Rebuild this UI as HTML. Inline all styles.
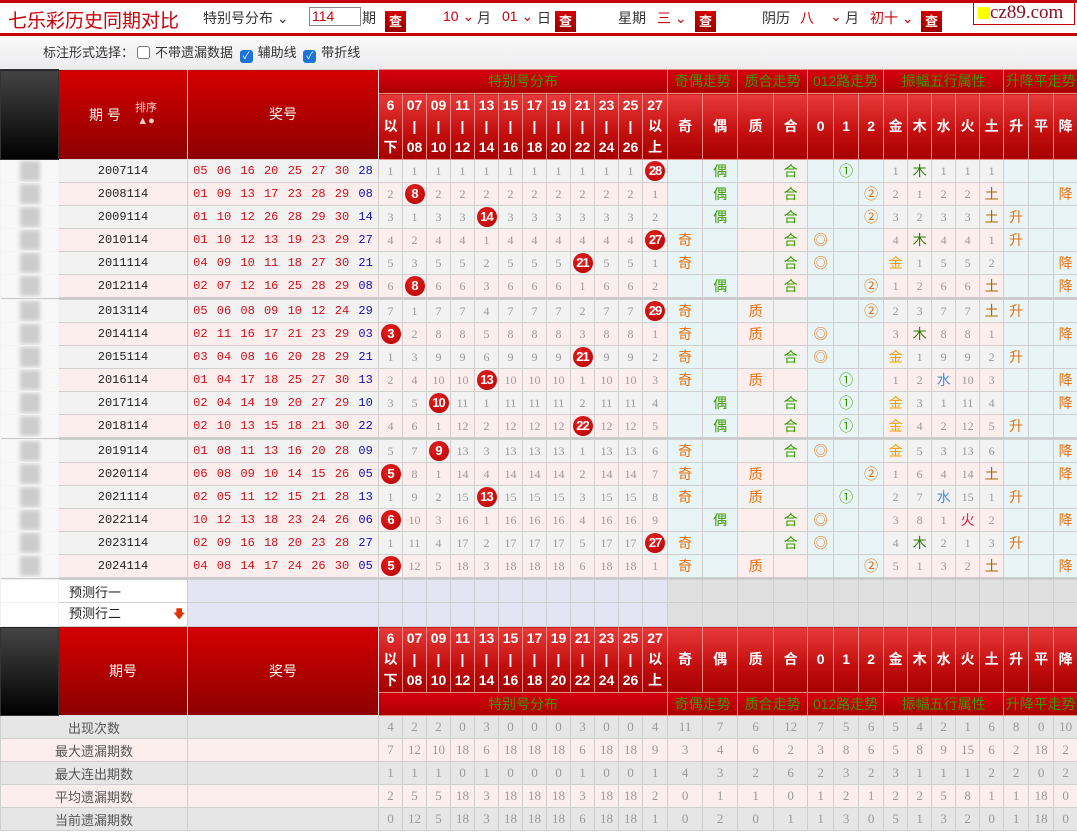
<!DOCTYPE html>
<html><head><meta charset="utf-8"><style>
*{margin:0;padding:0;box-sizing:border-box}
body{width:1077px;height:832px;overflow:hidden;background:#fff;font-family:"Liberation Sans","Noto Sans CJK SC",sans-serif;position:relative}
#top{position:absolute;left:0;top:0;width:1077px;height:36px;border-top:3px solid #c8000a;border-bottom:3px solid #c8000a;background:#fff}
#top span{position:absolute;top:5px;font-size:14px;color:#333}
.r{color:#c8000a!important}
.q{position:absolute;top:8px;width:21px;height:21px;background:linear-gradient(#d40000,#900);color:#fff;font-size:13px;font-weight:bold;text-align:center;line-height:21px}
#bar{position:absolute;left:0;top:36px;width:1077px;height:33px;background:linear-gradient(#fafafa,#ececee);font-size:13px;color:#333}
.cb{display:inline-block;width:13px;height:13px;border-radius:3px;vertical-align:-2px;margin:0 5px 0 3px}
.cb.off{border:1px solid #777;background:#fff}
.cb.on{background:#1a73d9;color:#fff;font-size:10px;line-height:13px;text-align:center}
table{position:absolute;left:0;top:69px;border-collapse:collapse;table-layout:fixed;width:1077px}
td{border:1px solid #cfcfcf;padding:0;text-align:center;font-size:12px;color:#999;height:23px;overflow:hidden;white-space:nowrap;font-family:"Liberation Serif","Noto Sans CJK SC",serif}
.h td{background:linear-gradient(#e83a3a,#c20d0d 60%,#a50000);color:#fff;font-size:14px;font-weight:bold;border-color:#f08888;font-family:"Liberation Sans","Noto Sans CJK SC",sans-serif;line-height:21px}
.h td.g{background:linear-gradient(#d80010,#a80000);font-weight:normal}
td.big{background:linear-gradient(#d40000,#8c0000)!important;font-weight:normal!important;border-color:#ddd!important}
td.dk{background:linear-gradient(#444,#222 50%,#000)!important;border-color:#333!important}
tr.a td{background:#f2f2f2}
tr.b td{background:#fdeeee}
tr.a td.c,tr.b td.c{background:#e9f4f6}
td.l{background:#f8f8f8!important;border-color:#f4f4f4}
td.l i{display:block;width:20px;height:20px;margin:0 auto;background:#ccc;filter:blur(2px)}
td.p{color:#222;font-family:"Liberation Mono",monospace;font-size:12px}
td.n{color:#d0101a;font-family:"Liberation Mono",monospace;font-size:12px;word-spacing:2px}
td.n b{color:#1010b0;font-weight:normal}
.bl{display:inline-block;width:20px;height:20px;border-radius:50%;background:radial-gradient(circle at 40% 35%,#e82020,#b00000);color:#fff;font-weight:bold;font-family:"Liberation Sans",sans-serif;font-size:13px;line-height:20px;letter-spacing:-1px}
.o{color:#e8700a!important;font-size:14px}.g{color:#3a9a00!important;font-size:14px}.y{color:#f0a000!important;font-size:14px}.m{color:#2d7a00!important;font-size:14px}.w{color:#4a8ee0!important;font-size:14px}.f{color:#e0204a!important;font-size:14px}.t{color:#a06a00!important;font-size:14px}
tr.sep td{height:2px;background:#c8c8c8;border:0}
tr.pr td{background:#e0e0e0;height:23px}
tr.pr td.lv{background:#e4e4f4}
tr.pr td.wt{background:#fff;color:#222;text-align:left;padding-left:10px;font-family:"Noto Sans CJK SC",sans-serif;font-size:13px}
tr.s td{font-size:13px;height:23px}
tr.sa td{background:#e6e6e6}
tr.sb td{background:#fdeeee}
td.sl{color:#555!important;font-family:"Noto Sans CJK SC",sans-serif}
</style></head><body>
<div id="top">
<span style="left:8px;top:3px;font-size:19px;color:#c8000a">七乐彩历史同期对比</span>
<span style="left:203px">特别号分布 ⌄</span>
<span style="left:309px;top:4px;width:52px;height:19px;border:1px solid #888;color:#c8000a;padding-left:2px;line-height:17px">114</span>
<span style="left:362px">期</span><div class="q" style="left:385px">查</div>
<span class="r" style="left:443px">10 ⌄</span><span style="left:477px">月</span>
<span class="r" style="left:502px">01 ⌄</span><span style="left:537px">日</span><div class="q" style="left:555px">查</div>
<span style="left:618px">星期</span><span class="r" style="left:657px">三 ⌄</span><div class="q" style="left:695px">查</div>
<span style="left:762px">阴历</span><span class="r" style="left:800px">八</span><span class="r" style="left:830px">⌄</span><span style="left:845px">月</span>
<span class="r" style="left:870px">初十 ⌄</span><div class="q" style="left:921px">查</div>
<div style="position:absolute;left:973px;top:-1px;width:102px;height:23px;border:1px solid #c8000a;background:#fff;font-family:'Liberation Serif',serif;font-size:19px;color:#8a1020;line-height:20px;padding-left:4px"><i style="display:inline-block;width:12px;height:12px;background:#ff0;vertical-align:-1px"></i>cz89.com</div>
</div>
<div id="bar"><div style="position:absolute;left:43px;top:6px">标注形式选择：<span class="cb off"></span>不带遗漏数据 <span class="cb on">✓</span>辅助线 <span class="cb on">✓</span>带折线</div></div>
<table>
<colgroup><col style="width:58px"><col style="width:129px"><col style="width:191px"><col style="width:24px"><col style="width:24px"><col style="width:24px"><col style="width:24px"><col style="width:24px"><col style="width:24px"><col style="width:24px"><col style="width:24px"><col style="width:24px"><col style="width:24px"><col style="width:24px"><col style="width:25px"><col style="width:35px"><col style="width:35px"><col style="width:36px"><col style="width:34px"><col style="width:26px"><col style="width:25px"><col style="width:25px"><col style="width:24px"><col style="width:24px"><col style="width:24px"><col style="width:24px"><col style="width:24px"><col style="width:25px"><col style="width:25px"><col style="width:24px"></colgroup>
<tr class="h" style="height:24px"><td class="dk" rowspan="2" style="height:24px"></td><td class="big" rowspan="2"><span style="display:inline-block;width:16px;line-height:28px;margin-right:30px;vertical-align:middle">期 号</span><span style="display:inline-block;font-size:11px;color:#fcc;line-height:13px;vertical-align:middle">排序<br>▲●</span></td><td class="big" rowspan="2">奖号</td><td class="g" colspan="12" style="height:24px">特别号分布</td><td class="g" colspan="2">奇偶走势</td><td class="g" colspan="2">质合走势</td><td class="g" colspan="3">012路走势</td><td class="g" colspan="5">振幅五行属性</td><td class="g" colspan="3">升降平走势</td></tr>
<tr class="h" style="height:66px"><td style="height:66px">6<br>以<br>下</td><td>07<br>|<br>08</td><td>09<br>|<br>10</td><td>11<br>|<br>12</td><td>13<br>|<br>14</td><td>15<br>|<br>16</td><td>17<br>|<br>18</td><td>19<br>|<br>20</td><td>21<br>|<br>22</td><td>23<br>|<br>24</td><td>25<br>|<br>26</td><td>27<br>以<br>上</td><td>奇</td><td>偶</td><td>质</td><td>合</td><td>0</td><td>1</td><td>2</td><td>金</td><td>木</td><td>水</td><td>火</td><td>土</td><td>升</td><td>平</td><td>降</td></tr>
<tr class="a"><td class="l"><i></i></td><td class="p">2007114</td><td class="n">05 06 16 20 25 27 30 <b>28</b></td><td>1</td><td>1</td><td>1</td><td>1</td><td>1</td><td>1</td><td>1</td><td>1</td><td>1</td><td>1</td><td>1</td><td><span class="bl">28</span></td><td class="c"></td><td class="c g">偶</td><td></td><td class="g">合</td><td class="c"></td><td class="c g">①</td><td class="c"></td><td>1</td><td class="m">木</td><td>1</td><td>1</td><td>1</td><td class="c"></td><td class="c"></td><td class="c"></td></tr>
<tr class="b"><td class="l"><i></i></td><td class="p">2008114</td><td class="n">01 09 13 17 23 28 29 <b>08</b></td><td>2</td><td><span class="bl">8</span></td><td>2</td><td>2</td><td>2</td><td>2</td><td>2</td><td>2</td><td>2</td><td>2</td><td>2</td><td>1</td><td class="c"></td><td class="c g">偶</td><td></td><td class="g">合</td><td class="c"></td><td class="c"></td><td class="c o">②</td><td>2</td><td>1</td><td>2</td><td>2</td><td class="t">土</td><td class="c"></td><td class="c"></td><td class="c o">降</td></tr>
<tr class="a"><td class="l"><i></i></td><td class="p">2009114</td><td class="n">01 10 12 26 28 29 30 <b>14</b></td><td>3</td><td>1</td><td>3</td><td>3</td><td><span class="bl">14</span></td><td>3</td><td>3</td><td>3</td><td>3</td><td>3</td><td>3</td><td>2</td><td class="c"></td><td class="c g">偶</td><td></td><td class="g">合</td><td class="c"></td><td class="c"></td><td class="c o">②</td><td>3</td><td>2</td><td>3</td><td>3</td><td class="t">土</td><td class="c o">升</td><td class="c"></td><td class="c"></td></tr>
<tr class="b"><td class="l"><i></i></td><td class="p">2010114</td><td class="n">01 10 12 13 19 23 29 <b>27</b></td><td>4</td><td>2</td><td>4</td><td>4</td><td>1</td><td>4</td><td>4</td><td>4</td><td>4</td><td>4</td><td>4</td><td><span class="bl">27</span></td><td class="c o">奇</td><td class="c"></td><td></td><td class="g">合</td><td class="c o">◎</td><td class="c"></td><td class="c"></td><td>4</td><td class="m">木</td><td>4</td><td>4</td><td>1</td><td class="c o">升</td><td class="c"></td><td class="c"></td></tr>
<tr class="a"><td class="l"><i></i></td><td class="p">2011114</td><td class="n">04 09 10 11 18 27 30 <b>21</b></td><td>5</td><td>3</td><td>5</td><td>5</td><td>2</td><td>5</td><td>5</td><td>5</td><td><span class="bl">21</span></td><td>5</td><td>5</td><td>1</td><td class="c o">奇</td><td class="c"></td><td></td><td class="g">合</td><td class="c o">◎</td><td class="c"></td><td class="c"></td><td class="y">金</td><td>1</td><td>5</td><td>5</td><td>2</td><td class="c"></td><td class="c"></td><td class="c o">降</td></tr>
<tr class="b"><td class="l"><i></i></td><td class="p">2012114</td><td class="n">02 07 12 16 25 28 29 <b>08</b></td><td>6</td><td><span class="bl">8</span></td><td>6</td><td>6</td><td>3</td><td>6</td><td>6</td><td>6</td><td>1</td><td>6</td><td>6</td><td>2</td><td class="c"></td><td class="c g">偶</td><td></td><td class="g">合</td><td class="c"></td><td class="c"></td><td class="c o">②</td><td>1</td><td>2</td><td>6</td><td>6</td><td class="t">土</td><td class="c"></td><td class="c"></td><td class="c o">降</td></tr>
<tr class="sep"><td colspan="30"></td></tr>
<tr class="a"><td class="l"><i></i></td><td class="p">2013114</td><td class="n">05 06 08 09 10 12 24 <b>29</b></td><td>7</td><td>1</td><td>7</td><td>7</td><td>4</td><td>7</td><td>7</td><td>7</td><td>2</td><td>7</td><td>7</td><td><span class="bl">29</span></td><td class="c o">奇</td><td class="c"></td><td class="o">质</td><td></td><td class="c"></td><td class="c"></td><td class="c o">②</td><td>2</td><td>3</td><td>7</td><td>7</td><td class="t">土</td><td class="c o">升</td><td class="c"></td><td class="c"></td></tr>
<tr class="b"><td class="l"><i></i></td><td class="p">2014114</td><td class="n">02 11 16 17 21 23 29 <b>03</b></td><td><span class="bl">3</span></td><td>2</td><td>8</td><td>8</td><td>5</td><td>8</td><td>8</td><td>8</td><td>3</td><td>8</td><td>8</td><td>1</td><td class="c o">奇</td><td class="c"></td><td class="o">质</td><td></td><td class="c o">◎</td><td class="c"></td><td class="c"></td><td>3</td><td class="m">木</td><td>8</td><td>8</td><td>1</td><td class="c"></td><td class="c"></td><td class="c o">降</td></tr>
<tr class="a"><td class="l"><i></i></td><td class="p">2015114</td><td class="n">03 04 08 16 20 28 29 <b>21</b></td><td>1</td><td>3</td><td>9</td><td>9</td><td>6</td><td>9</td><td>9</td><td>9</td><td><span class="bl">21</span></td><td>9</td><td>9</td><td>2</td><td class="c o">奇</td><td class="c"></td><td></td><td class="g">合</td><td class="c o">◎</td><td class="c"></td><td class="c"></td><td class="y">金</td><td>1</td><td>9</td><td>9</td><td>2</td><td class="c o">升</td><td class="c"></td><td class="c"></td></tr>
<tr class="b"><td class="l"><i></i></td><td class="p">2016114</td><td class="n">01 04 17 18 25 27 30 <b>13</b></td><td>2</td><td>4</td><td>10</td><td>10</td><td><span class="bl">13</span></td><td>10</td><td>10</td><td>10</td><td>1</td><td>10</td><td>10</td><td>3</td><td class="c o">奇</td><td class="c"></td><td class="o">质</td><td></td><td class="c"></td><td class="c g">①</td><td class="c"></td><td>1</td><td>2</td><td class="w">水</td><td>10</td><td>3</td><td class="c"></td><td class="c"></td><td class="c o">降</td></tr>
<tr class="a"><td class="l"><i></i></td><td class="p">2017114</td><td class="n">02 04 14 19 20 27 29 <b>10</b></td><td>3</td><td>5</td><td><span class="bl">10</span></td><td>11</td><td>1</td><td>11</td><td>11</td><td>11</td><td>2</td><td>11</td><td>11</td><td>4</td><td class="c"></td><td class="c g">偶</td><td></td><td class="g">合</td><td class="c"></td><td class="c g">①</td><td class="c"></td><td class="y">金</td><td>3</td><td>1</td><td>11</td><td>4</td><td class="c"></td><td class="c"></td><td class="c o">降</td></tr>
<tr class="b"><td class="l"><i></i></td><td class="p">2018114</td><td class="n">02 10 13 15 18 21 30 <b>22</b></td><td>4</td><td>6</td><td>1</td><td>12</td><td>2</td><td>12</td><td>12</td><td>12</td><td><span class="bl">22</span></td><td>12</td><td>12</td><td>5</td><td class="c"></td><td class="c g">偶</td><td></td><td class="g">合</td><td class="c"></td><td class="c g">①</td><td class="c"></td><td class="y">金</td><td>4</td><td>2</td><td>12</td><td>5</td><td class="c o">升</td><td class="c"></td><td class="c"></td></tr>
<tr class="sep"><td colspan="30"></td></tr>
<tr class="a"><td class="l"><i></i></td><td class="p">2019114</td><td class="n">01 08 11 13 16 20 28 <b>09</b></td><td>5</td><td>7</td><td><span class="bl">9</span></td><td>13</td><td>3</td><td>13</td><td>13</td><td>13</td><td>1</td><td>13</td><td>13</td><td>6</td><td class="c o">奇</td><td class="c"></td><td></td><td class="g">合</td><td class="c o">◎</td><td class="c"></td><td class="c"></td><td class="y">金</td><td>5</td><td>3</td><td>13</td><td>6</td><td class="c"></td><td class="c"></td><td class="c o">降</td></tr>
<tr class="b"><td class="l"><i></i></td><td class="p">2020114</td><td class="n">06 08 09 10 14 15 26 <b>05</b></td><td><span class="bl">5</span></td><td>8</td><td>1</td><td>14</td><td>4</td><td>14</td><td>14</td><td>14</td><td>2</td><td>14</td><td>14</td><td>7</td><td class="c o">奇</td><td class="c"></td><td class="o">质</td><td></td><td class="c"></td><td class="c"></td><td class="c o">②</td><td>1</td><td>6</td><td>4</td><td>14</td><td class="t">土</td><td class="c"></td><td class="c"></td><td class="c o">降</td></tr>
<tr class="a"><td class="l"><i></i></td><td class="p">2021114</td><td class="n">02 05 11 12 15 21 28 <b>13</b></td><td>1</td><td>9</td><td>2</td><td>15</td><td><span class="bl">13</span></td><td>15</td><td>15</td><td>15</td><td>3</td><td>15</td><td>15</td><td>8</td><td class="c o">奇</td><td class="c"></td><td class="o">质</td><td></td><td class="c"></td><td class="c g">①</td><td class="c"></td><td>2</td><td>7</td><td class="w">水</td><td>15</td><td>1</td><td class="c o">升</td><td class="c"></td><td class="c"></td></tr>
<tr class="b"><td class="l"><i></i></td><td class="p">2022114</td><td class="n">10 12 13 18 23 24 26 <b>06</b></td><td><span class="bl">6</span></td><td>10</td><td>3</td><td>16</td><td>1</td><td>16</td><td>16</td><td>16</td><td>4</td><td>16</td><td>16</td><td>9</td><td class="c"></td><td class="c g">偶</td><td></td><td class="g">合</td><td class="c o">◎</td><td class="c"></td><td class="c"></td><td>3</td><td>8</td><td>1</td><td class="f">火</td><td>2</td><td class="c"></td><td class="c"></td><td class="c o">降</td></tr>
<tr class="a"><td class="l"><i></i></td><td class="p">2023114</td><td class="n">02 09 16 18 20 23 28 <b>27</b></td><td>1</td><td>11</td><td>4</td><td>17</td><td>2</td><td>17</td><td>17</td><td>17</td><td>5</td><td>17</td><td>17</td><td><span class="bl">27</span></td><td class="c o">奇</td><td class="c"></td><td></td><td class="g">合</td><td class="c o">◎</td><td class="c"></td><td class="c"></td><td>4</td><td class="m">木</td><td>2</td><td>1</td><td>3</td><td class="c o">升</td><td class="c"></td><td class="c"></td></tr>
<tr class="b"><td class="l"><i></i></td><td class="p">2024114</td><td class="n">04 08 14 17 24 26 30 <b>05</b></td><td><span class="bl">5</span></td><td>12</td><td>5</td><td>18</td><td>3</td><td>18</td><td>18</td><td>18</td><td>6</td><td>18</td><td>18</td><td>1</td><td class="c o">奇</td><td class="c"></td><td class="o">质</td><td></td><td class="c"></td><td class="c"></td><td class="c o">②</td><td>5</td><td>1</td><td>3</td><td>2</td><td class="t">土</td><td class="c"></td><td class="c"></td><td class="c o">降</td></tr>
<tr class="sep"><td colspan="30"></td></tr>
<tr class="pr"><td class="wt" style="border-color:#f0f0f0"></td><td class="wt">预测行一</td><td class="lv"></td><td class="lv"></td><td class="lv"></td><td class="lv"></td><td class="lv"></td><td class="lv"></td><td class="lv"></td><td class="lv"></td><td class="lv"></td><td class="lv"></td><td class="lv"></td><td class="lv"></td><td class="lv"></td><td></td><td></td><td></td><td></td><td></td><td></td><td></td><td></td><td></td><td></td><td></td><td></td><td></td><td></td><td></td></tr>
<tr class="pr"><td class="wt" style="border-color:#f0f0f0"></td><td class="wt">预测行二<span style="color:#e03000;font-size:12px;margin-left:52px">🡇</span></td><td class="lv"></td><td class="lv"></td><td class="lv"></td><td class="lv"></td><td class="lv"></td><td class="lv"></td><td class="lv"></td><td class="lv"></td><td class="lv"></td><td class="lv"></td><td class="lv"></td><td class="lv"></td><td class="lv"></td><td></td><td></td><td></td><td></td><td></td><td></td><td></td><td></td><td></td><td></td><td></td><td></td><td></td><td></td><td></td></tr>
<tr class="h" style="height:66px"><td class="dk" rowspan="2"></td><td class="big" rowspan="2">期号</td><td class="big" rowspan="2">奖号</td><td style="height:66px">6<br>以<br>下</td><td>07<br>|<br>08</td><td>09<br>|<br>10</td><td>11<br>|<br>12</td><td>13<br>|<br>14</td><td>15<br>|<br>16</td><td>17<br>|<br>18</td><td>19<br>|<br>20</td><td>21<br>|<br>22</td><td>23<br>|<br>24</td><td>25<br>|<br>26</td><td>27<br>以<br>上</td><td>奇</td><td>偶</td><td>质</td><td>合</td><td>0</td><td>1</td><td>2</td><td>金</td><td>木</td><td>水</td><td>火</td><td>土</td><td>升</td><td>平</td><td>降</td></tr>
<tr class="h" style="height:23px"><td class="g" colspan="12" style="height:23px">特别号分布</td><td class="g" colspan="2">奇偶走势</td><td class="g" colspan="2">质合走势</td><td class="g" colspan="3">012路走势</td><td class="g" colspan="5">振幅五行属性</td><td class="g" colspan="3">升降平走势</td></tr>
<tr class="s sa"><td class="sl" colspan="2">出现次数</td><td></td><td>4</td><td>2</td><td>2</td><td>0</td><td>3</td><td>0</td><td>0</td><td>0</td><td>3</td><td>0</td><td>0</td><td>4</td><td>11</td><td>7</td><td>6</td><td>12</td><td>7</td><td>5</td><td>6</td><td>5</td><td>4</td><td>2</td><td>1</td><td>6</td><td>8</td><td>0</td><td>10</td></tr>
<tr class="s sb"><td class="sl" colspan="2">最大遗漏期数</td><td></td><td>7</td><td>12</td><td>10</td><td>18</td><td>6</td><td>18</td><td>18</td><td>18</td><td>6</td><td>18</td><td>18</td><td>9</td><td>3</td><td>4</td><td>6</td><td>2</td><td>3</td><td>8</td><td>6</td><td>5</td><td>8</td><td>9</td><td>15</td><td>6</td><td>2</td><td>18</td><td>2</td></tr>
<tr class="s sa"><td class="sl" colspan="2">最大连出期数</td><td></td><td>1</td><td>1</td><td>1</td><td>0</td><td>1</td><td>0</td><td>0</td><td>0</td><td>1</td><td>0</td><td>0</td><td>1</td><td>4</td><td>3</td><td>2</td><td>6</td><td>2</td><td>3</td><td>2</td><td>3</td><td>1</td><td>1</td><td>1</td><td>2</td><td>2</td><td>0</td><td>2</td></tr>
<tr class="s sb"><td class="sl" colspan="2">平均遗漏期数</td><td></td><td>2</td><td>5</td><td>5</td><td>18</td><td>3</td><td>18</td><td>18</td><td>18</td><td>3</td><td>18</td><td>18</td><td>2</td><td>0</td><td>1</td><td>1</td><td>0</td><td>1</td><td>2</td><td>1</td><td>2</td><td>2</td><td>5</td><td>8</td><td>1</td><td>1</td><td>18</td><td>0</td></tr>
<tr class="s sa"><td class="sl" colspan="2">当前遗漏期数</td><td></td><td>0</td><td>12</td><td>5</td><td>18</td><td>3</td><td>18</td><td>18</td><td>18</td><td>6</td><td>18</td><td>18</td><td>1</td><td>0</td><td>2</td><td>0</td><td>1</td><td>1</td><td>3</td><td>0</td><td>5</td><td>1</td><td>3</td><td>2</td><td>0</td><td>1</td><td>18</td><td>0</td></tr>
</table>
</body></html>
